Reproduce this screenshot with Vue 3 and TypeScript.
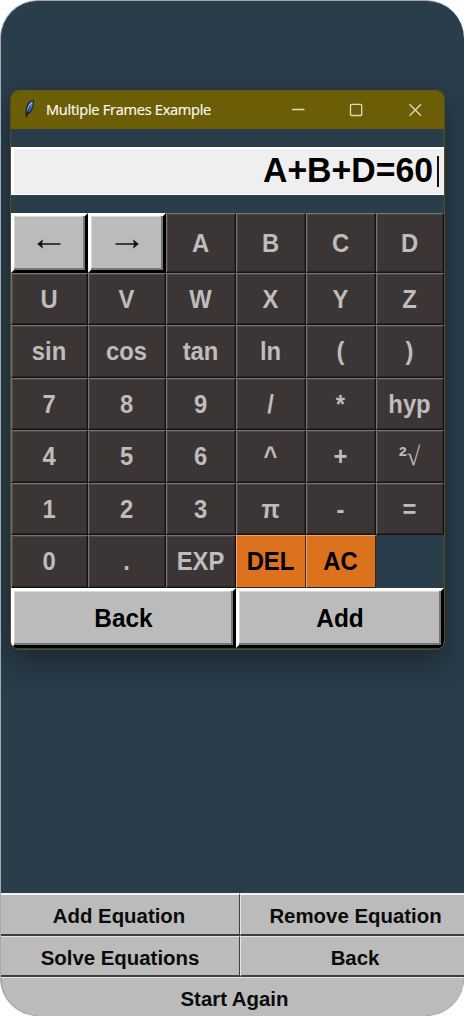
<script setup lang="ts">
interface Key {
  label: string
  kind?: 'arrow' | 'orange' | 'empty' | 'root'
}

const display: string = 'A+B+D=60'

const arrows: Key[] = [
  { label: '←', kind: 'arrow' },
  { label: '→', kind: 'arrow' },
]

const plain: Key[] = [
  'A', 'B', 'C', 'D',
  'U', 'V', 'W', 'X', 'Y', 'Z',
  'sin', 'cos', 'tan', 'ln', '(', ')',
  '7', '8', '9', '/', '*', 'hyp',
  '4', '5', '6', '^', '+',
].map((label) => ({ label }))

const keys: Key[] = [
  ...arrows,
  ...plain,
  { label: '²√', kind: 'root' },
  ...['1', '2', '3', 'π', '-', '=', '0', '.', 'EXP'].map((label) => ({ label })),
  { label: 'DEL', kind: 'orange' },
  { label: 'AC', kind: 'orange' },
  { label: '', kind: 'empty' },
]

const menu: string[] = ['Add Equation', 'Remove Equation', 'Solve Equations', 'Back']
</script>

<template>
  <main class="screen">
    <section class="window">
      <header class="titlebar">
        <svg class="feather" viewBox="0 0 14 20" width="14" height="20">
          <path d="M3.2 18.6C2 13.5 2.400 7 6.200 3 8 1.200 9.600.8 10.700 1c.5 4-.3 9-3 12.200-1 1.200-2.400 1.600-3.300 2z" fill="#16202c" />
          <path d="M3.800 13.500C3.500 8.500 5.200 4.300 9.900 1.800c.3 4.400-.9 8.400-3.400 11z" fill="#3f78bd" />
          <path d="M4.300 11.500C4.600 7.500 6.200 4.500 9.400 2.300 8.400 6 6.700 9 4.300 11.500z" fill="#8fb9e2" />
          <path d="M3.700 18.500C4.100 14 5.500 10 7.500 6.500" stroke="#131a20" stroke-width=".9" fill="none" />
        </svg>
        <h1 class="title">Multiple Frames Example</h1>
        <svg class="controls" viewBox="0 0 134 14" width="134" height="14" fill="none" stroke="#dedbc3" stroke-width="1.300">
          <path d="M1 6.500H13.500" />
          <rect x="59.500" y="1.300" width="11.200" height="11.200" rx="1" />
          <path d="M118.500 1.200L130 12.700M130 1.200L118.500 12.700" />
        </svg>
      </header>
      <div class="entry"><span class="expression">{{ display }}</span><span class="caret"></span></div>
      <div class="keypad">
        <button v-for="(key, i) in keys" :key="i" class="key" :class="key.kind">
          <svg v-if="key.kind === 'arrow'" class="glyph" :class="{ flip: key.label === '→' }" viewBox="0 0 24 10" width="24" height="10">
            <path d="M3 5H23.500" stroke="#111" stroke-width="1.300" />
            <path d="M.5 5L5.800.8 4.400 5 5.800 9.200z" fill="#111" stroke="#111" stroke-width=".5" />
          </svg>
          <span v-else-if="key.kind === 'root'" class="label">²<span class="radical">√</span></span>
          <span v-else class="label">{{ key.label }}</span>
        </button>
      </div>
      <div class="actions">
        <button class="action"><span class="label">Back</span></button>
        <button class="action"><span class="label">Add</span></button>
      </div>
    </section>
    <nav class="menu">
      <button v-for="item in menu" :key="item" class="menu-item"><span class="label">{{ item }}</span></button>
      <button class="menu-item wide"><span class="label">Start Again</span></button>
    </nav>
  </main>
</template>

<style>
body {
  margin: 0;
  background: #fff;
}
</style>

<style scoped>
* {
  box-sizing: border-box;
}
button {
  margin: 0;
  padding: 0;
  border: 0;
  font: inherit;
  color: inherit;
}
.screen {
  width: 464px;
  height: 1016px;
  border-radius: 38px;
  overflow: hidden;
  background: #2a3d4b;
  border-top: 1px solid #a4aaad;
  border-left: 1px solid #a4aaad;
  display: flex;
  flex-direction: column;
  justify-content: space-between;
  font-family: "Liberation Sans", Arial, sans-serif;
  font-weight: bold;
}
.window {
  width: 435px;
  height: 560px;
  margin: 88.600px 0 0 9px;
  border: 1px solid #574f14;
  border-top-color: #6c5e07;
  border-radius: 9px;
  overflow: hidden;
  background: #2a3d4b;
  box-shadow: 0 18px 34px rgba(0, 0, 0, 0.3), 0 0 12px rgba(0, 0, 0, 0.1);
  flex: none;
}
.titlebar {
  height: 38px;
  background: #6c5e07;
  display: flex;
  align-items: center;
}
.feather {
  margin-left: 12px;
  margin-top: -2px;
}
.title {
  margin: -2px 0 0 9px;
  font: 400 14.600px/20px "Open Sans", "Noto Sans", sans-serif;
  letter-spacing: -0.280px;
  color: #fbfaf0;
  -webkit-text-stroke: 0.200px #fbfaf0;
  white-space: nowrap;
}
.controls {
  margin-left: auto;
  margin-right: 19px;
  margin-top: 0;
}
.entry {
  height: 48px;
  margin: 18px 0;
  padding-right: 5px;
  border: solid #fff;
  border-width: 2px 0 1px 3px;
  background: #efefef;
  color: #000;
  font-size: 33.800px;
  line-height: 44px;
  display: flex;
  align-items: center;
  justify-content: flex-end;
}
.expression {
  transform: translateY(-1px) scaleY(1.040);
}
.caret {
  width: 2px;
  height: 31px;
  margin-left: 4px;
  background: #160c18;
}
.label {
  display: inline-block;
  transform: translateY(1px) scaleY(1.050);
}
.keypad {
  display: grid;
  grid-template-columns: 77px 78px 70px 70px 70px 68px;
  grid-template-rows: 60px 52px 53px 52px 53px 52px 53px;
}
.key {
  background: #3c3535;
  color: #bdbdbd;
  font-size: 23.800px;
  line-height: 28px;
  border: 1.500px solid;
  border-color: #777373 #151212 #151212 #777373;
  box-shadow: inset -1px -1px #2a2525, inset 1px 1px #4d4747;
  display: flex;
  align-items: center;
  justify-content: center;
  padding-right: 1px;
}
.arrow {
  background: #bbb;
  border: 3px solid;
  border-color: #fff #000 #000 #fff;
  box-shadow: inset -2px -2px #777, inset 1px 1px #d8d8d8;
}
.glyph {
  margin-top: 3px;
}
.flip {
  transform: scaleX(-1);
}
.orange {
  background: #dc711e;
  color: #000;
  border-color: #eaa873 #3c2212 #3c2212 #eaa873;
  box-shadow: none;
}
.empty {
  visibility: hidden;
}
.radical {
  font-family: "Liberation Serif", serif;
  font-weight: 400;
  font-size: 25px;
}
.actions {
  display: grid;
  grid-template-columns: 225px 208px;
  height: 60px;
}
.action {
  background: #bbb;
  color: #000;
  font-size: 24.400px;
  border: 3px solid;
  border-color: #fff #000 #000 #fff;
  box-shadow: inset -2px -2px #777, inset 1px 1px #d8d8d8;
}
.menu {
  display: grid;
  grid-template-columns: 239px 224px;
  grid-template-rows: 43px 41px 39px;
}
.menu-item {
  background: #bbb;
  color: #0b0b0b;
  font-size: 20.400px;
  border: solid;
  border-width: 1px 1.500px 2px 1px;
  border-color: #e6e6e6 #403d3d #403d3d #e6e6e6;
  white-space: nowrap;
}
.menu-item .label {
  transform: translateY(2px) scaleY(1.030);
}
.menu-item:nth-child(-n + 2) {
  border-top: 2px solid #f3f3f3;
}
.menu-item:nth-child(odd) {
  border-left: 0;
}
.menu-item:nth-child(1) {
  padding-right: 2px;
}
.menu-item:nth-child(2) {
  padding-left: 6px;
}
.menu-item:nth-child(4) {
  padding-left: 5px;
}
.menu-item:nth-child(even) {
  border-right: 0;
}
.menu-item.wide {
  grid-column: 1 / 3;
  border-bottom: 0;
  border-right: 0;
  padding-left: 4px;
}
</style>
